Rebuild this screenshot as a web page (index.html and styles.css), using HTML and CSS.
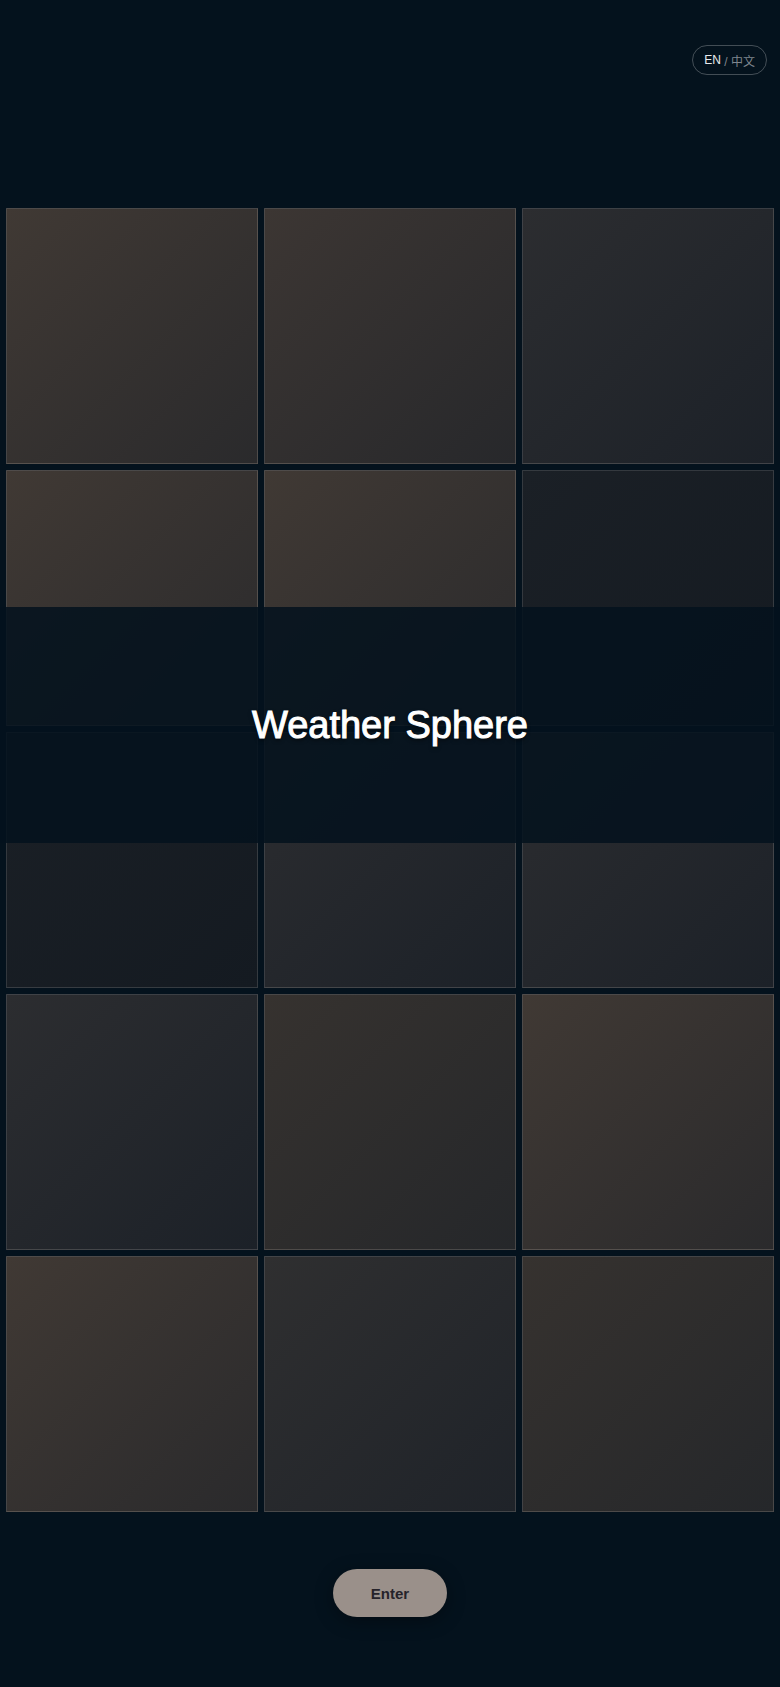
FILE: index.html
```html
<!DOCTYPE html>
<html lang="en">
<head>
<meta charset="utf-8">
<title>Weather Sphere</title>
<link rel="stylesheet" href="styles.css">
</head>
<body>
<div class="page">
  <header class="topbar">
    <button class="lang" type="button"><span class="lang-on">EN</span><span class="lang-off"> / 中文</span></button>
  </header>
  <main class="grid">
    <div class="tile warm"></div>
    <div class="tile warm2"></div>
    <div class="tile cool"></div>
    <div class="tile warm"></div>
    <div class="tile warm"></div>
    <div class="tile dark"></div>
    <div class="tile dark"></div>
    <div class="tile cool"></div>
    <div class="tile cool"></div>
    <div class="tile cool"></div>
    <div class="tile mid"></div>
    <div class="tile warm"></div>
    <div class="tile warm"></div>
    <div class="tile mid2"></div>
    <div class="tile mid"></div>
  </main>
  <div class="band">
    <h1 class="title">Weather Sphere</h1>
  </div>
  <footer class="actions">
    <button class="enter" type="button">Enter</button>
  </footer>
</div>
</body>
</html>
```
FILE: styles.css
```css
* { box-sizing: border-box; }
html, body {
  margin: 0;
  padding: 0;
  background: #04121d;
}
body {
  font-family: "Liberation Sans", "Noto Sans CJK SC", sans-serif;
  color: #fff;
}
.page {
  position: relative;
  width: 780px;
  min-height: 1687px;
  background: #04121d;
}
.topbar {
  height: 208px;
  display: flex;
  justify-content: flex-end;
  align-items: flex-start;
  padding: 45px 13px 0 0;
}
.lang {
  height: 30px;
  padding: 0 11px;
  border: 1px solid rgba(255, 255, 255, 0.25);
  border-radius: 15px;
  background: transparent;
  font-family: "Liberation Sans", "Noto Sans CJK SC", sans-serif;
  font-size: 12px;
  display: flex;
  align-items: center;
  white-space: pre;
}
.lang-on { color: #e8eaec; }
.lang-off { color: #7f868e; }

.grid {
  display: grid;
  grid-template-columns: repeat(3, 1fr);
  grid-auto-rows: 256px;
  gap: 6px;
  padding: 0 6px;
}
.tile {
  border: 1px solid rgba(255, 255, 255, 0.13);
}
.warm { background: linear-gradient(135deg, #403934 0%, #2a2a2c 100%); }
.warm2 { background: linear-gradient(135deg, #3c3633 0%, #27282b 100%); }
.mid { background: linear-gradient(135deg, #36322f 0%, #25272a 100%); }
.mid2 { background: linear-gradient(135deg, #2f2f30 0%, #1f2329 100%); }
.cool { background: linear-gradient(135deg, #2c2d30 0%, #1c2128 100%); }
.dark { background: linear-gradient(135deg, #1b2026 0%, #141a21 100%); }

.band {
  position: absolute;
  left: 0;
  right: 0;
  top: 607px;
  height: 236px;
  background: rgba(4, 18, 29, 0.86);
  display: flex;
  align-items: center;
  justify-content: center;
}
.title {
  margin: 0;
  font-family: "Liberation Sans", sans-serif;
  font-weight: normal;
  font-size: 38px;
  color: #ffffff;
  -webkit-text-stroke: 1px #ffffff;
  text-shadow: 0 2px 4px rgba(0, 0, 0, 0.6);
}

.actions {
  display: flex;
  justify-content: center;
  padding-top: 57px;
}
.enter {
  width: 114px;
  height: 48px;
  border: none;
  border-radius: 24px;
  background: #9a908a;
  color: #26232a;
  font-family: "Liberation Sans", sans-serif;
  font-weight: bold;
  font-size: 15px;
  box-shadow: 0 4px 18px rgba(0, 0, 0, 0.35);
}
```
